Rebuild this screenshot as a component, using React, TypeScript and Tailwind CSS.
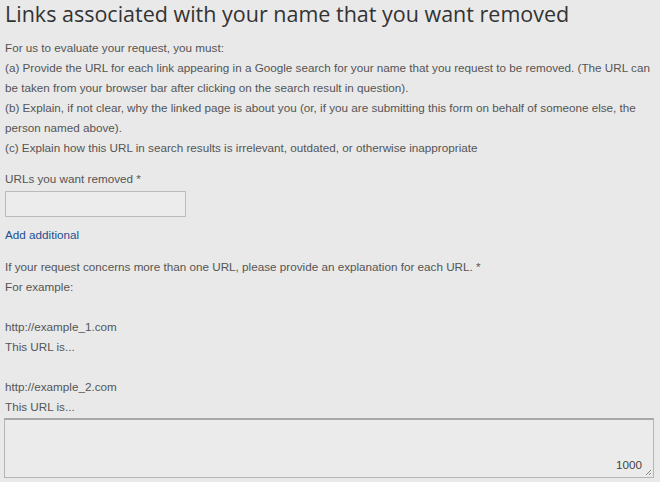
import React from 'react';

export default function App() {
  return (
    <div className="w-[660px] h-[482px] overflow-hidden bg-[#e9e9e9] pl-[5px] pr-[6px] text-[#555] font-['Liberation_Sans',Arial,sans-serif] text-[11.7px]">
      <h1 className="font-['Open_Sans',sans-serif] text-[21.5px] leading-[28px] text-[#333]">
        Links associated with your name that you want removed
      </h1>

      <div className="mt-[10px] leading-[20px]">
        <p>For us to evaluate your request, you must:</p>
        <p>
          (a) Provide the URL for each link appearing in a Google search for your name that you request to be removed. (The URL can be taken from your browser bar after clicking on the search result in question).
        </p>
        <p>
          (b) Explain, if not clear, why the linked page is about you (or, if you are submitting this form on behalf of someone else, the person named above).
        </p>
        <p>(c) Explain how this URL in search results is irrelevant, outdated, or otherwise inappropriate</p>
      </div>

      <div className="mt-[13px]">
        <p className="leading-[16px]">URLs you want removed *</p>
        <input className="block mt-[4px] w-[181px] h-[26px] border border-[#bbb] bg-[#ececec]" />
        <p className="mt-[10px] leading-[16px] text-[#1f4f8f]">Add additional</p>
      </div>

      <div className="mt-[14px] leading-[20px]">
        <p>If your request concerns more than one URL, please provide an explanation for each URL. *</p>
        <p>For example:</p>
        <p className="mt-[20px]">http://example_1.com</p>
        <p>This URL is...</p>
        <p className="mt-[20px]">http://example_2.com</p>
        <p>This URL is...</p>
      </div>

      <div className="relative mt-[1px] -ml-[1px] w-[650px] h-[60px] border border-[#b5b5b5] border-t-2 border-t-[#a9a9a9] bg-[#ebebeb]">
        <span className="absolute right-[11px] bottom-[4px] leading-[16px] text-[#444]">1000</span>
        <svg className="absolute right-[1px] bottom-[1px]" width="7" height="7" viewBox="0 0 7 7">
          <path d="M6 1 L1 6 M6 4 L4 6" stroke="#888" strokeWidth="1" />
        </svg>
      </div>
    </div>
  );
}
